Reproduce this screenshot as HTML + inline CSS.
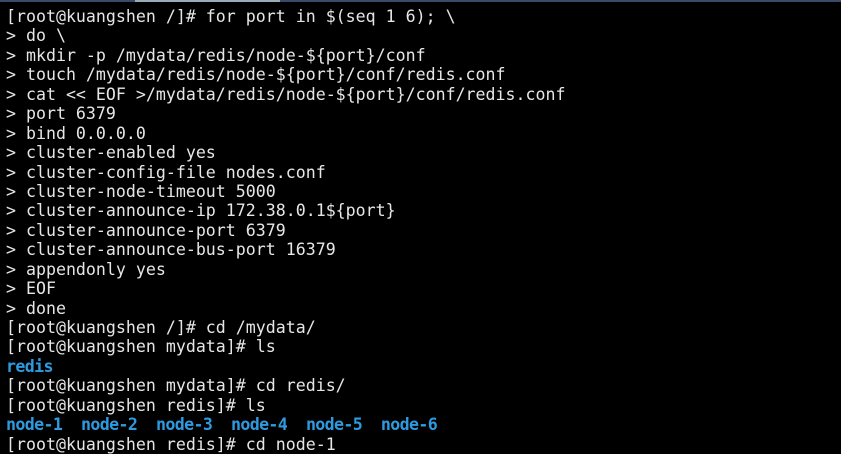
<!DOCTYPE html>
<html><head><style>
html,body{margin:0;padding:0;background:#000;width:841px;height:440px;overflow:hidden}
.t{position:absolute;left:6px;top:7px;font-family:"DejaVu Sans Mono","Liberation Mono",monospace;font-size:16.6px;line-height:19.43px;color:#e6e6e6;white-space:pre}
.b{color:#2e9be0;font-weight:bold}
.n{letter-spacing:-0.62px}
.bar{position:absolute;top:0;left:0;width:841px;height:2px;background:#3a4a6a}
.bar2{position:absolute;top:0;left:135px;width:145px;height:2px;background:#9ab}
</style></head><body>
<div class="bar"></div><div class="bar2"></div>
<div class="t">[root@kuangshen /]# for port in $(seq 1 6); \
> do \
> mkdir -p /mydata/redis/node-${port}/conf
> touch /mydata/redis/node-${port}/conf/redis.conf
> cat &lt;&lt; EOF &gt;/mydata/redis/node-${port}/conf/redis.conf
> port 6379
> bind 0.0.0.0
> cluster-enabled yes
> cluster-config-file nodes.conf
> cluster-node-timeout 5000
> cluster-announce-ip 172.38.0.1${port}
> cluster-announce-port 6379
> cluster-announce-bus-port 16379
> appendonly yes
> EOF
> done
[root@kuangshen /]# cd /mydata/
[root@kuangshen mydata]# ls
<span class="b n">redis</span>
[root@kuangshen mydata]# cd redis/
[root@kuangshen redis]# ls
<span class="n"><span class="b">node-1</span>  <span class="b">node-2</span>  <span class="b">node-3</span>  <span class="b">node-4</span>  <span class="b">node-5</span>  <span class="b">node-6</span></span>
[root@kuangshen redis]# cd node-1</div>
</body></html>
